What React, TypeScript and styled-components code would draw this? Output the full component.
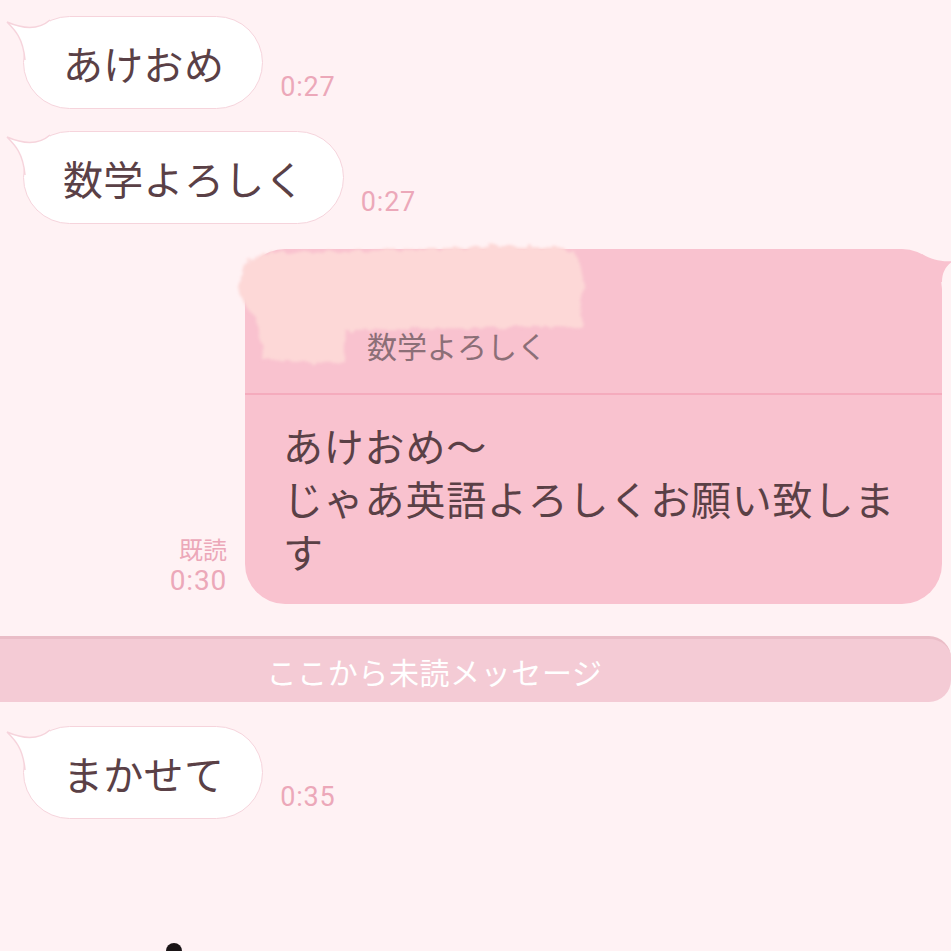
import React from "react";
import styled, { createGlobalStyle } from "styled-components";

const Global = createGlobalStyle`
  html, body { margin: 0; padding: 0; background: #fff2f4; }
  body { font-family: "Noto Sans CJK JP", "Noto Sans", sans-serif; }
`;

const Screen = styled.div`
  width: 951px;
  height: 951px;
  overflow: hidden;
  background: #fff2f4;
  display: flex;
  flex-direction: column;
  font-family: "Noto Sans CJK JP", "Noto Sans", sans-serif;

  & > * {
    flex-shrink: 0;
  }
`;

const LeftRow = styled.div<{ $top: number }>`
  display: flex;
  align-items: flex-end;
  gap: 17px;
  padding-left: 23px;
  margin-top: ${(p) => p.$top}px;
`;

const RightRow = styled.div<{ $top: number }>`
  display: flex;
  justify-content: flex-end;
  align-items: flex-end;
  gap: 18px;
  padding-right: 9px;
  margin-top: ${(p) => p.$top}px;
`;

const Bubble = styled.div`
  position: relative;
  box-sizing: border-box;
  height: 93px;
  padding: 1px 38px 0 39px;
  display: flex;
  align-items: center;
  background: #ffffff;
  border: 1.5px solid #f6d4dc;
  border-radius: 47px;
  font-size: 40px;
  line-height: 1;
  letter-spacing: 0.3px;
  color: #5a4046;
  white-space: nowrap;
`;

const TailSvg = styled.svg`
  position: absolute;
  left: -21px;
  top: -5.5px;
  width: 60px;
  height: 60px;
  overflow: visible;
`;

const Time = styled.div<{ $bottom: number; $size: number }>`
  font-family: Roboto, "Liberation Sans", sans-serif;
  font-size: ${(p) => p.$size}px;
  line-height: 32px;
  letter-spacing: 0.8px;
  color: #eca8b9;
  margin-bottom: ${(p) => p.$bottom}px;
`;

const ReadInfo = styled.div`
  display: flex;
  flex-direction: column;
  align-items: flex-end;
  margin-bottom: 7px;
`;

const ReadLabel = styled.div`
  font-size: 24px;
  line-height: 32px;
  color: #eca8b9;
`;

const PinkBubble = styled.div`
  position: relative;
  flex: 0 0 697px;
  box-sizing: border-box;
  background: #f9c2cf;
  border-radius: 40px;
  display: flex;
  flex-direction: column;
`;

const RightTail = styled.svg`
  position: absolute;
  right: -12px;
  top: -3px;
  width: 60px;
  height: 50px;
  overflow: visible;
`;

const Quote = styled.div`
  position: relative;
  height: 146px;
  box-sizing: border-box;
  display: flex;
  flex-direction: column;
  justify-content: flex-end;
  padding: 0 0 28px 122px;
  border-bottom: 2px solid #f5abbd;
`;

const QuoteText = styled.div`
  font-size: 30px;
  line-height: 40px;
  color: #8c6f77;
`;

const Redaction = styled.svg`
  position: absolute;
  left: -10px;
  top: -7px;
  width: 352px;
  height: 126px;
  overflow: visible;
`;

const Body = styled.div`
  padding: 24px 36px 26px 38px;
  font-size: 40px;
  line-height: 53px;
  letter-spacing: 0.8px;
  color: #5a4046;
`;

const Divider = styled.div`
  margin-top: 32px;
  height: 66px;
  box-sizing: border-box;
  background: #f4cbd5;
  border-top: 3px solid #eabdc7;
  border-radius: 0 22px 22px 0;
  display: flex;
  align-items: center;
  justify-content: center;
  padding-right: 82px;
`;

const DividerText = styled.div`
  font-size: 30px;
  letter-spacing: 0.6px;
  color: #ffffff;
  line-height: 1;
`;

const StickerPeek = styled.div`
  margin: 124px 0 0 166px;
  width: 16px;
  height: 16px;
  border-radius: 50%;
  background: #1a1416;
`;

const Tail = () => (
  <TailSvg viewBox="0 0 60 60">
    <path d="M47 8 C38 16 25 19 4 10 C12 18 20 26 22 48 L30 50 L47 12 Z" fill="#ffffff" />
    <path
      d="M47 8 C38 16 25 19 4 10 C12 18 20 26 22 48"
      fill="none"
      stroke="#f6d4dc"
      strokeWidth="1.5"
    />
  </TailSvg>
);

const LeftMessage = ({ text, time, top }: { text: string; time: string; top: number }) => (
  <LeftRow $top={top}>
    <Bubble>
      <Tail />
      {text}
    </Bubble>
    <Time $bottom={6} $size={27}>
      {time}
    </Time>
  </LeftRow>
);

export default function App() {
  return (
    <>
      <Global />
      <Screen>
        <LeftMessage text="あけおめ" time="0:27" top={16} />
        <LeftMessage text="数学よろしく" time="0:27" top={22} />

        <RightRow $top={25}>
          <ReadInfo>
            <ReadLabel>既読</ReadLabel>
            <Time $bottom={0} $size={28}>
              0:30
            </Time>
          </ReadInfo>
          <PinkBubble>
            <RightTail viewBox="0 0 60 50">
              <path d="M28 8 C38 14 48 16 59 15 C52 20 48 26 48 36 L26 38 Z" fill="#f9c2cf" />
            </RightTail>
            <Quote>
              <Redaction viewBox="0 0 352 126">
                <defs>
                  <filter id="rough" x="-10%" y="-10%" width="120%" height="120%">
                    <feTurbulence type="fractalNoise" baseFrequency="0.08" numOctaves="3" seed="4" />
                    <feDisplacementMap in="SourceGraphic" scale="10" />
                    <feGaussianBlur stdDeviation="1.6" />
                  </filter>
                </defs>
                <path
                  filter="url(#rough)"
                  fill="#fdd8d7"
                  d="M8 25 Q20 8 60 10 L240 6 Q300 0 340 10 L348 32 L346 84 L110 88 L108 118 Q60 124 28 118 L22 76 Q4 62 5 40 Z"
                />
              </Redaction>
              <QuoteText>数学よろしく</QuoteText>
            </Quote>
            <Body>
              あけおめ〜
              <br />
              じゃあ英語よろしくお願い致します
            </Body>
          </PinkBubble>
        </RightRow>

        <Divider>
          <DividerText>ここから未読メッセージ</DividerText>
        </Divider>

        <LeftMessage text="まかせて" time="0:35" top={24} />

        <StickerPeek />
      </Screen>
    </>
  );
}
